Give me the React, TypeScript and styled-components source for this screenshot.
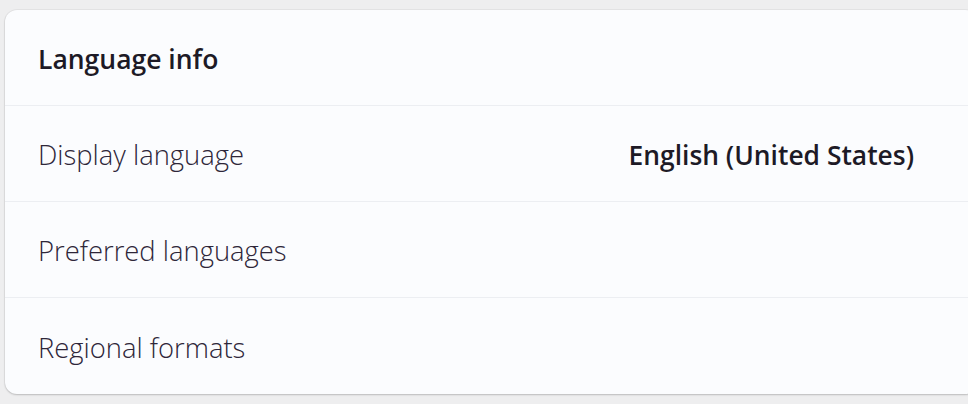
import React from "react"
import styled, { createGlobalStyle } from "styled-components"

const GlobalStyle = createGlobalStyle`
  html, body {
    margin: 0;
    padding: 0;
    background: #eeeeef;
    overflow: hidden;
  }
  body {
    font-family: "Open Sans", "Noto Sans", "Liberation Sans", sans-serif;
    color: #1d1a26;
  }
`

const Page = styled.div`
  padding: 10px 0 0 5px;
  height: 404px;
  box-sizing: border-box;
`

const Card = styled.div`
  width: 972px;
  background: #fbfcfe;
  border-radius: 12px;
  box-shadow: 0 1px 2px rgba(0, 0, 0, 0.18), 0 0 0 1px rgba(0, 0, 0, 0.04);
  overflow: hidden;
`

const Row = styled.div<{ $last?: boolean }>`
  display: flex;
  align-items: center;
  justify-content: space-between;
  height: 96px;
  padding: 2px 63px 0 33px;
  box-sizing: border-box;
  border-bottom: ${({ $last }) => ($last ? "none" : "1px solid #eceef2")};
`

const Title = styled.span`
  font-size: 26.5px;
  font-weight: 600;
`

const Label = styled.span`
  font-size: 27.4px;
  font-weight: 350;
  color: #2e2639;
`

const Value = styled.span`
  font-size: 26.4px;
  font-weight: 600;
`

const rows = [
  { label: "Display language", value: "English (United States)" },
  { label: "Preferred languages" },
  { label: "Regional formats" },
]

export default function App() {
  return (
    <Page>
      <GlobalStyle />
      <Card>
        <Row>
          <Title>Language info</Title>
        </Row>
        {rows.map((r, i) => (
          <Row key={r.label} $last={i === rows.length - 1}>
            <Label>{r.label}</Label>
            {r.value && <Value>{r.value}</Value>}
          </Row>
        ))}
      </Card>
    </Page>
  )
}
